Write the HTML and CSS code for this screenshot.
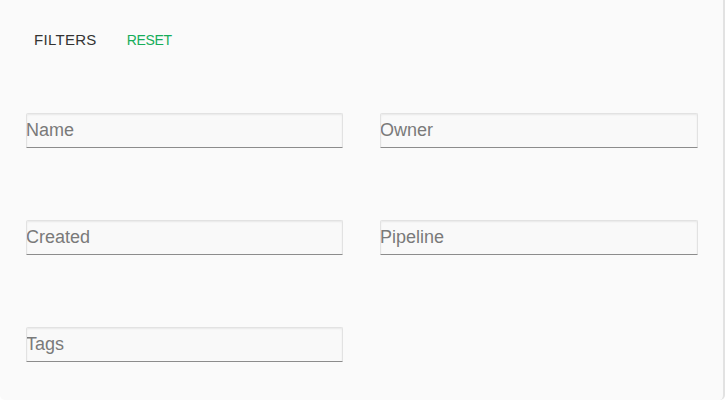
FILE: index.html
```html
<!DOCTYPE html>
<html>
<head>
<meta charset="utf-8">
<link rel="stylesheet" href="styles.css">
</head>
<body>
<div class="card">
  <div class="header">
    <span class="title">FILTERS</span>
    <button class="reset">RESET</button>
  </div>
  <div class="grid">
    <input class="field" placeholder="Name">
    <input class="field" placeholder="Owner">
    <input class="field" placeholder="Created">
    <input class="field" placeholder="Pipeline">
    <input class="field" placeholder="Tags">
  </div>
</div>
</body>
</html>
```

FILE: styles.css
```css
html, body {
  margin: 0;
  padding: 0;
  background: #ffffff;
}
.card {
  box-sizing: border-box;
  width: 725px;
  height: 400px;
  background: #fafafa;
  border-right: 2px solid #e2e2e2;
  border-radius: 0 0 5px 5px;
  font-family: "Liberation Sans", Arial, sans-serif;
}
.header {
  display: flex;
  align-items: baseline;
  padding: 31px 0 0 34px;
  height: 18px;
}
.title {
  font-size: 15px;
  line-height: 18px;
  letter-spacing: 0.3px;
  color: #333;
}
.reset {
  margin-left: 30px;
  background: none;
  border: none;
  padding: 0;
  font-family: inherit;
  font-size: 14px;
  line-height: 18px;
  letter-spacing: -0.3px;
  color: #16ad5a;
}
.grid {
  display: grid;
  grid-template-columns: 317px 318px;
  column-gap: 37px;
  row-gap: 72px;
  padding: 64px 0 0 26px;
}
.field {
  box-sizing: border-box;
  height: 35px;
  width: 100%;
  margin: 0;
  padding: 0;
  background: #f9f9f9;
  border: 1px solid #e2e2e2;
  border-bottom: 1px solid #8c8c8c;
  border-radius: 2px 2px 0 0;
  box-shadow: inset 0 1px 2px rgba(0,0,0,0.07);
  font-family: "Liberation Sans", Arial, sans-serif;
  font-size: 18px;
  color: #555;
  outline: none;
  text-indent: -1px;
}
.field::placeholder {
  color: #7a7a7a;
}
```
